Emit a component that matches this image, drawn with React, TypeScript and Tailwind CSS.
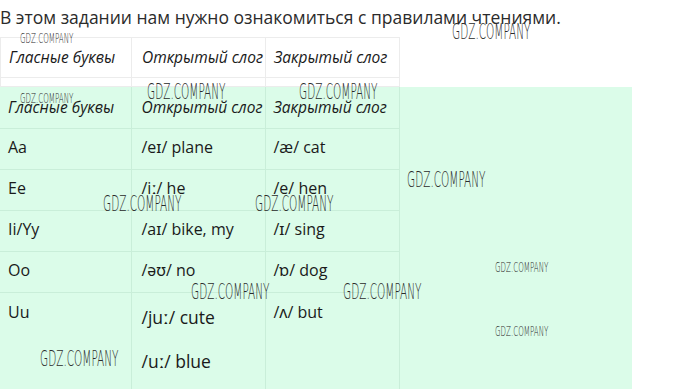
import React from "react";

const rows: { letter: string; open: string; closed: string }[] = [
  { letter: "Aa", open: "/eɪ/ plane", closed: "/æ/ cat" },
  { letter: "Ee", open: "/iː/ he", closed: "/e/ hen" },
  { letter: "Ii/Yy", open: "/aɪ/ bike, my", closed: "/ɪ/ sing" },
  { letter: "Oo", open: "/əʊ/ no", closed: "/ɒ/ dog" },
];

const marks: { x: number; y: number; size: "s" | "m" }[] = [
  { x: 452, y: 22, size: "m" },
  { x: 20, y: 31, size: "s" },
  { x: 20, y: 91, size: "s" },
  { x: 147, y: 82, size: "m" },
  { x: 299, y: 82, size: "m" },
  { x: 407, y: 170, size: "m" },
  { x: 103, y: 194, size: "m" },
  { x: 255, y: 194, size: "m" },
  { x: 495, y: 260, size: "s" },
  { x: 191, y: 282, size: "m" },
  { x: 343, y: 282, size: "m" },
  { x: 495, y: 324, size: "s" },
  { x: 40, y: 349, size: "m" },
];

function Mark({ x, y, size }: { x: number; y: number; size: "s" | "m" }) {
  return (
    <span
      className={
        "absolute whitespace-nowrap text-[#2a2a2a] origin-top-left leading-none " +
        (size === "m" ? "text-[21px] scale-x-[0.5]" : "text-[14px] scale-x-[0.51]")
      }
      style={{ left: x, top: y, fontFamily: "'DejaVu Sans', sans-serif", fontWeight: 200 }}
    >
      GDZ.COMPANY
    </span>
  );
}

export default function App() {
  const font = { fontFamily: "'Open Sans', 'Noto Sans', sans-serif" };
  const line = "border-r border-b border-[#c9eed9] whitespace-nowrap";
  const head = "text-[15.5px] italic font-medium whitespace-nowrap";
  return (
    <div className="relative w-[680px] h-[389px] overflow-hidden bg-white text-[#1a1a1a]" style={font}>
      <p className="h-[37px] pt-[4px] text-[17.5px] leading-[26px] text-[#2b2b2b] whitespace-nowrap">
        В этом задании нам нужно ознакомиться с правилами чтениями.
      </p>

      <table className="w-[399px] border-collapse table-fixed">
        <colgroup>
          <col className="w-[131px]" />
          <col className="w-[134px]" />
          <col className="w-[134px]" />
        </colgroup>
        <tbody>
          <tr className="h-[40px]">
            <td className={"border border-[#ececec] pl-[8px] " + head}>Гласные буквы</td>
            <td className={"border border-[#ececec] pl-[10px] " + head}>Открытый слог</td>
            <td className={"border border-[#ececec] pl-[8px] " + head}>Закрытый слог</td>
          </tr>
          <tr className="h-[9px]">
            <td className="border border-[#ececec]" />
            <td className="border border-[#ececec]" />
            <td className="border border-[#ececec]" />
          </tr>
        </tbody>
      </table>

      <div className="w-[632px] h-[303px] bg-[#dbfce9]">
        <table className="w-[399px] border-collapse table-fixed">
          <colgroup>
            <col className="w-[131px]" />
            <col className="w-[134px]" />
            <col className="w-[134px]" />
          </colgroup>
          <tbody>
            <tr className="h-[41px]">
              <td className={line + " pl-[8px] " + head}>Гласные буквы</td>
              <td className={line + " pl-[10px] " + head}>Открытый слог</td>
              <td className={line + " pl-[8px] " + head}>Закрытый слог</td>
            </tr>
            {rows.map((r) => (
              <tr key={r.letter} className="h-[41px]">
                <td className={line + " pb-[3px] pl-[8px] text-[16px]"}>{r.letter}</td>
                <td className={line + " pb-[3px] pl-[10px] text-[16px]"}>{r.open}</td>
                <td className={line + " pb-[3px] pl-[8px] text-[16px]"}>{r.closed}</td>
              </tr>
            ))}
            <tr className="h-[98px]">
              <td className="border-r border-[#c9eed9] pl-[8px] pt-[7px] align-top text-[16px]">Uu</td>
              <td className="border-r border-[#c9eed9] pl-[10px] pt-[13px] align-top text-[17.5px] whitespace-nowrap">
                <p className="leading-[22px]">/juː/ cute</p>
                <p className="mt-[22px] leading-[22px]">/uː/ blue</p>
              </td>
              <td className="border-r border-[#c9eed9] pl-[8px] pt-[7px] align-top text-[16px]">/ʌ/ but</td>
            </tr>
          </tbody>
        </table>
      </div>

      {marks.map((m, i) => (
        <Mark key={i} {...m} />
      ))}
    </div>
  );
}
